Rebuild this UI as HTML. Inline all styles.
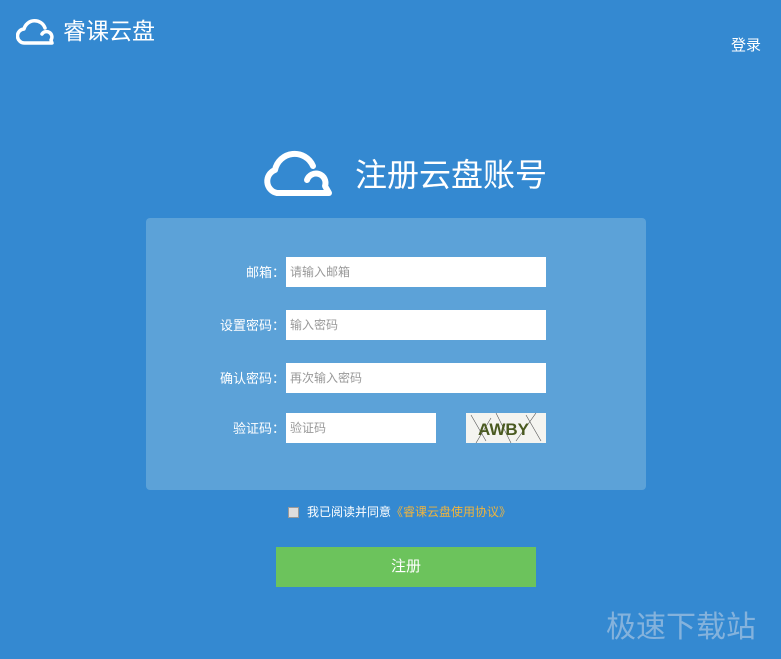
<!DOCTYPE html>
<html><head><meta charset="utf-8"><style>
*{margin:0;padding:0;box-sizing:border-box}
body{width:781px;height:659px;background:#3489d1;position:relative;overflow:hidden;font-family:"Liberation Sans","Noto Sans CJK SC",sans-serif;color:#fff}
.abs{position:absolute}
.panel{left:146px;top:218px;width:500px;height:272px;background:#5ca2d8;border-radius:4px}
.lbl{font-size:13px;text-align:right;width:140px;left:145px;line-height:30px;font-family:"Noto Sans CJK SC",sans-serif}
.inp{left:286px;width:260px;height:30px;background:#fff;color:#999;font-size:12px;line-height:30px;padding-left:4px}
</style></head><body>
<svg class="abs" style="left:16px;top:18px" width="42" height="28" viewBox="0 0 42 28"><path d="M9 25 A7 7 0 0 1 8 11 A11 11 0 0 1 29 10 M26 16 A5 5 0 1 1 35 22 L36 25 L9 25" fill="none" stroke="#fff" stroke-width="3.5" stroke-linecap="round" stroke-linejoin="round"/></svg>
<div class="abs" style="left:63px;top:15px;font-size:23px;line-height:32px">睿课云盘</div>
<div class="abs" style="left:731px;top:36px;font-size:15px;line-height:20px">登录</div>
<svg class="abs" style="left:261px;top:148px" width="82" height="50" viewBox="0 0 82 50"><path d="M16 45 A12 12 0 0 1 14 22 A20 20 0 0 1 52 18 M46 32 A8.5 8.5 0 1 1 64 38 L68 45 L16 45" fill="none" stroke="#fff" stroke-width="6" stroke-linecap="round" stroke-linejoin="round"/></svg>
<div class="abs" style="left:355px;top:154px;font-size:32px;line-height:42px">注册云盘账号</div>
<div class="abs panel"></div>
<div class="abs lbl" style="top:257px">邮箱：</div>
<div class="abs inp" style="top:257px">请输入邮箱</div>
<div class="abs lbl" style="top:310px">设置密码：</div>
<div class="abs inp" style="top:310px">输入密码</div>
<div class="abs lbl" style="top:363px">确认密码：</div>
<div class="abs inp" style="top:363px">再次输入密码</div>
<div class="abs lbl" style="top:413px">验证码：</div>
<div class="abs inp" style="top:413px;width:150px">验证码</div>
<svg class="abs" style="left:466px;top:413px" width="80" height="30" viewBox="0 0 80 30"><rect width="80" height="30" fill="#f4f4f0"/><path d="M5 2 L20 28 M30 0 L45 30 M60 2 L75 28 M10 30 L25 5 M50 28 L70 0" stroke="#555" stroke-width="0.6"/><text x="12" y="22" font-size="17" font-weight="bold" fill="#4a5a20" font-family="Liberation Sans">AWBY</text></svg>
<div class="abs" style="left:288px;top:507px;width:11px;height:11px;background:#ddd;border:1px solid #999"></div>
<div class="abs" style="left:307px;top:504px;font-size:12px;line-height:17px">我已阅读并同意<span style="color:#f0b43c">《睿课云盘使用协议》</span></div>
<div class="abs" style="left:276px;top:547px;width:260px;height:40px;background:#6cc35c;text-align:center;line-height:40px;font-size:15px">注册</div>
<div class="abs" style="left:606px;top:608px;font-size:30px;line-height:40px;color:#9fc0e0;opacity:.75">极速下载站</div>
</body></html>
